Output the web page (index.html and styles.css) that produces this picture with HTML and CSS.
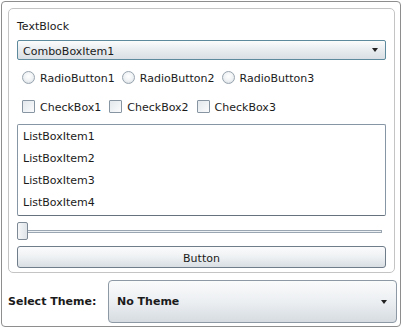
FILE: index.html
```html
<!DOCTYPE html>
<html>
<head>
<meta charset="utf-8">
<link rel="stylesheet" href="styles.css">
</head>
<body>
<div class="frame">
  <div class="group">
    <div class="textblock">TextBlock</div>
    <div class="combo">
      <span class="label">ComboBoxItem1</span>
      <span class="arrow"></span>
    </div>
    <div class="row radios">
      <label class="opt"><span class="radio"></span><span class="label">RadioButton1</span></label>
      <label class="opt"><span class="radio"></span><span class="label">RadioButton2</span></label>
      <label class="opt"><span class="radio"></span><span class="label">RadioButton3</span></label>
    </div>
    <div class="row checks">
      <label class="opt"><span class="check"></span><span class="label">CheckBox1</span></label>
      <label class="opt"><span class="check"></span><span class="label">CheckBox2</span></label>
      <label class="opt"><span class="check"></span><span class="label">CheckBox3</span></label>
    </div>
    <div class="listbox">
      <div class="item">ListBoxItem1</div>
      <div class="item">ListBoxItem2</div>
      <div class="item">ListBoxItem3</div>
      <div class="item">ListBoxItem4</div>
    </div>
    <div class="slider">
      <span class="thumb"></span>
      <span class="track"></span>
    </div>
    <div class="button"><span class="label">Button</span></div>
  </div>
  <div class="theme-row">
    <div class="theme-label">Select Theme:</div>
    <div class="theme-combo">
      <span>No Theme</span>
      <span class="arrow"></span>
    </div>
  </div>
</div>
</body>
</html>
```
FILE: styles.css
```css
* { box-sizing: border-box; }
html, body { margin: 0; padding: 0; background: #fff; }
body {
  font-family: "DejaVu Sans", sans-serif;
  font-size: 11px;
  color: #1b1b1b;
}
.label { padding-top: 2px; }
.frame {
  margin: 1px;
  width: 400px;
  height: 326px;
  border: 1px solid #8e8e8e;
  border-radius: 4px;
  padding: 6px 0 0 6px;
}
.group {
  width: 387px;
  height: 265px;
  border: 1px solid #c4c4c4;
  border-radius: 5px;
  padding: 8px 8px 3px 8px;
  display: flex;
  flex-direction: column;
}
.textblock {
  height: 16px;
  line-height: 16px;
  padding-top: 2px;
  box-sizing: content-box;
  margin-bottom: -2px;
}
.combo {
  margin-top: 7px;
  height: 20px;
  border: 1px solid #5d8a9c;
  border-radius: 2px;
  background: linear-gradient(#fbfcfc, #e8ecef 50%, #d9dfe4);
  display: flex;
  align-items: center;
  justify-content: space-between;
  padding: 0 7px 0 5px;
}
.arrow {
  width: 0;
  height: 0;
  border-left: 3.5px solid transparent;
  border-right: 3.5px solid transparent;
  border-top: 4px solid #222;
}
.row {
  display: flex;
  align-items: center;
  height: 14px;
  padding-left: 5px;
}
.radios { margin-top: 10px; }
.checks { margin-top: 15px; }
.opt {
  display: flex;
  align-items: center;
  margin-right: 7px;
}
.radio {
  width: 13px;
  height: 13px;
  border-radius: 50%;
  border: 1px solid #98a4ae;
  background: radial-gradient(circle at 50% 40%, #ffffff, #eef1f3 55%, #c9d1d8);
  margin-right: 5px;
}
.check {
  width: 13px;
  height: 13px;
  border: 1px solid #8795a2;
  border-radius: 1px;
  background: linear-gradient(135deg, #e3e8ec, #fafbfc);
  margin-right: 5px;
}
.checks .opt { margin-right: 8px; }
.listbox {
  margin-top: 11px;
  height: 92px;
  border: 1px solid #8796a4;
  border-bottom-color: #66737f;
  border-radius: 2px;
  padding: 0 0 0 5px;
}
.item {
  height: 22px;
  padding-top: 2px;
  line-height: 20px;
}
.slider {
  margin-top: 6px;
  height: 18px;
  display: flex;
  align-items: center;
  padding-right: 4px;
}
.thumb {
  width: 11px;
  height: 18px;
  border: 1px solid #7d8a96;
  border-radius: 2px;
  background: linear-gradient(90deg, #f6f7f8, #dfe4e8);
  flex: none;
}
.track {
  flex: 1;
  height: 3px;
  border: 1px solid #9aa6b2;
  border-left: none;
  background: #eef1f4;
}
.button {
  margin-top: 6px;
  height: 22px;
  border: 1px solid #6f7c89;
  border-radius: 3px;
  background: linear-gradient(#fbfbfc, #eef1f3 50%, #d8dee3);
  display: flex;
  align-items: center;
  justify-content: center;
}
.theme-row {
  display: flex;
  align-items: center;
  margin-top: 7px;
}
.theme-label {
  font-weight: bold;
  width: 100px;
}
.theme-combo {
  width: 289px;
  height: 43px;
  border: 1px solid #8d99a5;
  border-radius: 4px;
  background: linear-gradient(#fafbfb, #eceff2 50%, #d6dce1);
  display: flex;
  align-items: center;
  justify-content: space-between;
  padding: 0 9px 0 8px;
  font-weight: bold;
}
```
